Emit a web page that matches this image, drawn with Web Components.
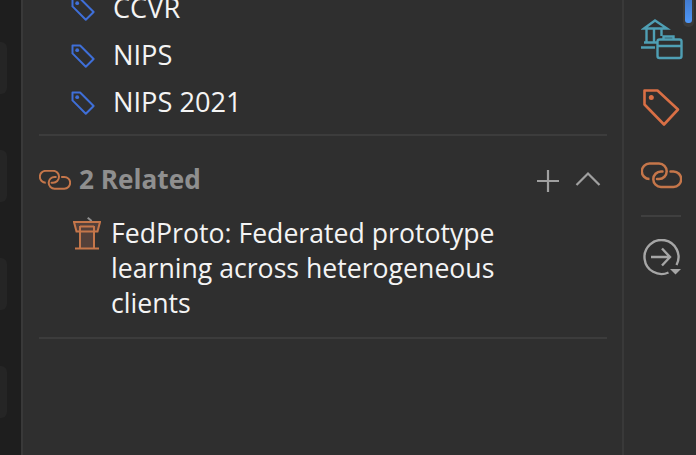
<!DOCTYPE html>
<html>
<head>
<meta charset="utf-8">
<style>
  html, body { margin: 0; height: 100%; background: #2f2f2f; overflow: hidden; }
</style>
</head>
<body>
<app-shell>
  <card-strip slot="left"></card-strip>
  <detail-panel slot="main">
    <tag-row>CCVR</tag-row>
    <tag-row>NIPS</tag-row>
    <tag-row>NIPS 2021</tag-row>
    <panel-divider class="first"></panel-divider>
    <section-header>2 Related</section-header>
    <related-item>FedProto: Federated prototype learning across heterogeneous clients</related-item>
    <panel-divider></panel-divider>
  </detail-panel>
  <tool-rail slot="right"></tool-rail>
</app-shell>
<script>
customElements.define('app-shell', class AppShell extends HTMLElement {
  constructor() {
    super();
    this.attachShadow({mode: 'open'});
    this.shadowRoot.innerHTML = `<style>
      :host {
        display: grid;
        grid-template-columns: 21px 1fr 72px;
        width: 696px;
        height: 455px;
        overflow: hidden;
        font-family: "Open Sans", "Noto Sans", sans-serif;
      }
    </style>
    <slot name="left"></slot>
    <slot name="main"></slot>
    <slot name="right"></slot>`;
  }
});

customElements.define('card-strip', class CardStrip extends HTMLElement {
  constructor() {
    super();
    this.attachShadow({mode: 'open'});
    this.shadowRoot.innerHTML = `<style>
      :host {
        display: flex;
        flex-direction: column;
        gap: 56px;
        padding-top: 42px;
        height: 455px;
        box-sizing: border-box;
        overflow: hidden;
        background: #1e1e1e;
      }
      div {
        flex: none;
        width: 7px;
        height: 52px;
        background: #252525;
        border-radius: 0 6px 6px 0;
      }
    </style>
    <div></div><div></div><div></div><div></div>`;
  }
});

customElements.define('detail-panel', class DetailPanel extends HTMLElement {
  constructor() {
    super();
    this.attachShadow({mode: 'open'});
    this.shadowRoot.innerHTML = `<style>
      :host {
        display: block;
        height: 455px;
        box-sizing: border-box;
        overflow: hidden;
        background: #2f2f2f;
        border-left: 2px solid #393939;
        border-right: 2px solid #393939;
        padding: 0 15px 0 16px;
      }
      .inner { margin-top: -16px; }
    </style>
    <div class="inner"><slot></slot></div>`;
  }
});

customElements.define('tag-row', class TagRow extends HTMLElement {
  constructor() {
    super();
    this.attachShadow({mode: 'open'});
    this.shadowRoot.innerHTML = `<style>
      :host {
        display: flex;
        align-items: center;
        height: 47px;
        padding-left: 32px;
        color: #f4f4f4;
        font-size: 27.200px;
      }
      svg { flex: none; width: 24px; height: 24px; margin-right: 18px; position: relative; top: 1px; }
    </style>
    <svg viewBox="0 0 24 24" fill="none" stroke="#3f6fd8" stroke-width="2" stroke-linejoin="round">
      <path d="M1.500 1.500h7.600L22.600 15l-7.800 7.800L1.500 9.400z"/>
      <circle cx="6.200" cy="6.200" r="1.900" fill="#3f6fd8" stroke="none"/>
    </svg>
    <slot></slot>`;
  }
});

customElements.define('panel-divider', class PanelDivider extends HTMLElement {
  constructor() {
    super();
    this.attachShadow({mode: 'open'});
    this.shadowRoot.innerHTML = `<style>
      :host { display: block; height: 2px; background: #3c3c3c; }
      :host(.first) { margin-top: 9px; }
    </style>`;
  }
});

customElements.define('section-header', class SectionHeader extends HTMLElement {
  constructor() {
    super();
    this.attachShadow({mode: 'open'});
    this.shadowRoot.innerHTML = `<style>
      :host {
        display: flex;
        align-items: center;
        height: 79px;
        box-sizing: border-box;
        padding-top: 7px;
        color: #8f8f8f;
        font-size: 26.200px;
        font-weight: 700;
      }
      .link { flex: none; width: 32px; height: 20px; margin-right: 8px; position: relative; top: 1px; }
      .label { flex: 1; }
      .plus { flex: none; width: 22px; height: 22px; margin-right: 16px; position: relative; top: 2px; }
      .chev { flex: none; width: 26px; height: 16px; margin-right: 6px; }
    </style>
    <svg class="link" viewBox="0 0 41 26" fill="none" stroke="#c5764a" stroke-width="2.600" stroke-linecap="round">
      <path d="M8 16.500h.5a7.700 7.700 0 0 1 0-15.400H18a7.700 7.700 0 0 1 7.700 7.700 7.700 7.700 0 0 1-7.700 7.700h-2"/>
      <path d="M29.500 9h3a7.700 7.700 0 0 1 0 15.400H20a7.700 7.700 0 0 1-7.700-7.700A7.700 7.700 0 0 1 20 9h1.500"/>
    </svg>
    <span class="label"><slot></slot></span>
    <svg class="plus" viewBox="0 0 22 22" stroke="#a0a0a0" stroke-width="2.200"><path d="M0 11h22M11 0v22"/></svg>
    <svg class="chev" viewBox="0 0 26 16" fill="none" stroke="#a0a0a0" stroke-width="2.200"><path d="M1.500 14 13 2.500 24.500 14"/></svg>`;
  }
});

customElements.define('related-item', class RelatedItem extends HTMLElement {
  constructor() {
    super();
    this.attachShadow({mode: 'open'});
    this.shadowRoot.innerHTML = `<style>
      :host {
        display: flex;
        align-items: flex-start;
        padding: 1px 80px 16px 34px;
        color: #f4f4f4;
        font-size: 26.650px;
        line-height: 35px;
      }
      svg { flex: none; width: 28px; height: 34px; margin: 0 10px 0 0; }
    </style>
    <svg viewBox="0 0 28 34" fill="none" stroke="#c5764a" stroke-width="2">
      <path d="M14.700 1.700l4 3.300" stroke="#8f8f8f"/>
      <path d="M7 15V32h14V15" fill="#54403a" stroke="none"/>
      <path d="M1 6h26l-2.500 9.500h-21z" fill="#54403a"/>
      <path d="M7 10.500h14M7 10v22M21 10v22M2 32.500h24"/>
    </svg>
    <span><slot></slot></span>`;
  }
});

customElements.define('tool-rail', class ToolRail extends HTMLElement {
  constructor() {
    super();
    this.attachShadow({mode: 'open'});
    this.shadowRoot.innerHTML = `<style>
      :host {
        display: flex;
        flex-direction: column;
        align-items: flex-start;
        position: relative;
        height: 455px;
        box-sizing: border-box;
        padding: 19px 0 0 17px;
        background: #2f2f2f;
      }
      svg { display: block; flex: none; }
      .bank { width: 42px; height: 41px; margin-bottom: 29px; }
      .tag { width: 38px; height: 38px; margin: 0 0 35px 2px; }
      .link { width: 41px; height: 27px; margin-bottom: 26px; }
      hr { width: 40px; height: 2px; margin: 0 0 22px; border: 0; background: #3f3f3f; }
      .go { width: 40px; height: 38px; margin-left: 2px; }
      .thumb {
        position: absolute;
        top: -6px;
        left: 59px;
        width: 11px;
        height: 33px;
        border-radius: 5px;
        background: #3b3b3b;
      }
      .thumb i {
        display: block;
        width: 7px;
        height: 29px;
        margin: 0 2px;
        border-radius: 3px;
        background: linear-gradient(#3f73c4, #4e97f8);
      }
    </style>
    <div class="thumb"><i></i></div>
    <svg class="bank" viewBox="0 0 42 41" fill="none" stroke="#4f9fb4" stroke-width="2.400">
      <path d="M3 9.500 14 1.500 26 9.500z"/>
      <path d="M5.500 10V23M13 10V23M20.500 10V17"/>
      <path d="M3 23.500h13M0 28.500h14"/>
      <rect x="16.500" y="20.500" width="24" height="18.500" rx="2"/>
      <path d="M22.500 20v-2.500h10V20M16.500 27h24"/>
    </svg>
    <svg class="tag" viewBox="0 0 38 38" fill="none" stroke="#d96f45" stroke-width="2.600" stroke-linejoin="round">
      <path d="M1.500 1.500h13L35 20.500 21 35.500 1.500 15.500z"/>
      <circle cx="8.300" cy="8.500" r="2.500" fill="#d96f45" stroke="none"/>
    </svg>
    <svg class="link" viewBox="0 0 41 26" fill="none" stroke="#c5764a" stroke-width="2.500" stroke-linecap="round">
      <path d="M8 16.500h.5a7.700 7.700 0 0 1 0-15.400H18a7.700 7.700 0 0 1 7.700 7.700 7.700 7.700 0 0 1-7.700 7.700h-2"/>
      <path d="M29.500 9h3a7.700 7.700 0 0 1 0 15.400H20a7.700 7.700 0 0 1-7.700-7.700A7.700 7.700 0 0 1 20 9h1.500"/>
    </svg>
    <hr>
    <svg class="go" viewBox="0 0 40 38" fill="none" stroke="#a6a6a6" stroke-width="2.400">
      <path d="M33.500 26A17 17 0 1 0 25.500 33.500"/>
      <path d="M8 18h19M19 9.500l8 8.500-8 8.500"/>
      <path d="M27 30h11l-5.500 5.500z" fill="#a6a6a6" stroke="none"/>
    </svg>`;
  }
});
</script>
</body>
</html>
